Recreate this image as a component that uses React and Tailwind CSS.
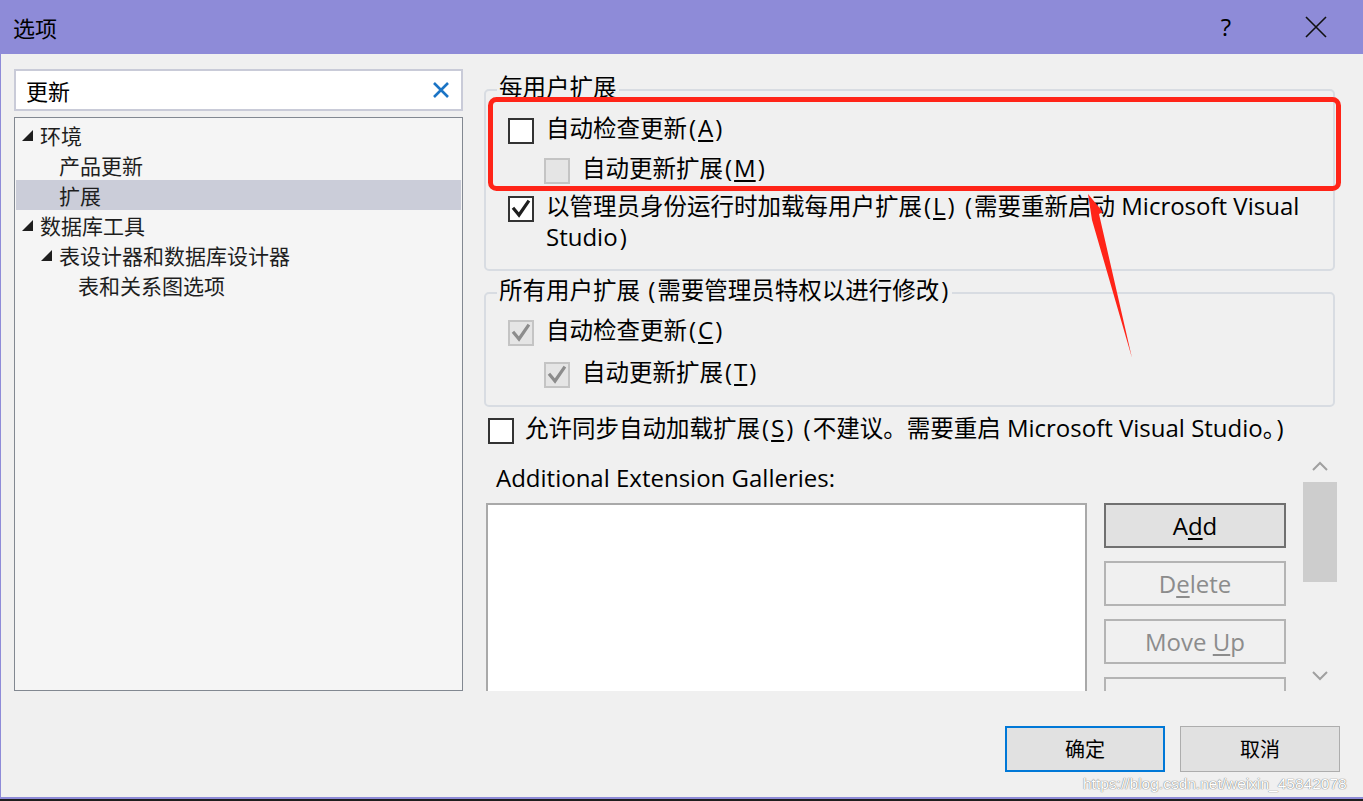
import React from "react";

const FONT = { fontFamily: '"Open Sans", "Noto Sans CJK SC", sans-serif' };
const CJK = { fontFamily: '"Noto Sans CJK SC", "Open Sans", sans-serif' };
const LAT = { fontFamily: '"Open Sans", sans-serif' };

function Mixed({ text }) {
  const chars = [];
  let i = 0;
  while (i < text.length) {
    let ch = text[i];
    let u = false;
    if (ch === "&") {
      u = true;
      ch = text[i + 1];
      i += 2;
    } else i += 1;
    const paren = ch === "(" || ch === ")";
    chars.push({ ch, u, ascii: ch.charCodeAt(0) < 128, paren });
  }
  const groups = [];
  for (const c of chars) {
    const last = groups[groups.length - 1];
    if (last && !c.paren && !last.paren && last.ascii === c.ascii && last.u === c.u) last.s += c.ch;
    else groups.push({ s: c.ch, ascii: c.ascii, u: c.u, paren: c.paren });
  }
  return (
    <>
      {groups.map((g, k) =>
        g.paren ? (
          <span key={k} className="text-[24px] leading-none ml-[2px] mr-[2px]" style={LAT}>
            {g.s}
          </span>
        ) : g.ascii ? (
          <span
            key={k}
            className={"text-[24px] leading-none " + (g.u ? "underline underline-offset-[3px]" : "")}
            style={LAT}
          >
            {g.s}
          </span>
        ) : (
          <span key={k} className="text-[23.5px] leading-none" style={CJK}>
            {g.s}
          </span>
        )
      )}
    </>
  );
}

function Tri() {
  return (
    <svg width="11" height="11" viewBox="0 0 11 11" className="shrink-0">
      <polygon points="11,0 11,11 0,11" fill="#1e1e1e" />
    </svg>
  );
}

function Check({ color = "#1e1e1e" }) {
  return (
    <svg width="22" height="22" viewBox="0 0 22 22">
      <polyline points="4,11 9,17 18,4" fill="none" stroke={color} strokeWidth="3.2" strokeLinecap="square" />
    </svg>
  );
}

function Box({ checked = false, disabled = false }) {
  return (
    <div
      className={
        "w-[26px] h-[26px] shrink-0 flex items-center justify-center border-2 " +
        (disabled ? "bg-[#e5e5e5] border-[#c4c4c4]" : "bg-white border-[#333333]")
      }
    >
      {checked && <Check color={disabled ? "#8c8c8c" : "#1e1e1e"} />}
    </div>
  );
}

function Row({ indent = false, checked, disabled, text, className = "" }) {
  return (
    <div className={"flex items-center h-[30px] " + (indent ? "pl-[58px] " : "pl-[22px] ") + className}>
      <Box checked={checked} disabled={disabled} />
      <span className="ml-[12px] text-[16px] leading-[30px] text-black whitespace-nowrap">
        <Mixed text={text} />
      </span>
    </div>
  );
}

function TreeRow({ level, tri, selected, children }) {
  return (
    <div
      className={"flex items-center h-[30px] " + (selected ? "bg-[#cbcdd9]" : "")}
      style={{ paddingLeft: 6 + 19 * level }}
    >
      {tri ? <Tri /> : <div className="w-[11px] shrink-0" />}
      <span className="ml-[7px] text-[21px] leading-[30px] text-[#1e1e1e] whitespace-nowrap" style={CJK}>
        {children}
      </span>
    </div>
  );
}

function Btn({ children, disabled, primary }) {
  return (
    <div
      className={
        "h-[45px] shrink-0 flex items-center justify-center border-2 " +
        (primary
          ? "bg-[#e1e1e1] border-[#707070] text-black"
          : disabled
          ? "bg-[#f0f0f0] border-[#b4b4b4] text-[#8c8c8c]"
          : "")
      }
    >
      <span className="text-[24px] whitespace-pre" style={LAT}>
        {children}
      </span>
    </div>
  );
}

export default function App() {
  return (
    <div className="w-[1363px] h-[801px] relative overflow-hidden flex flex-col bg-[#f0f0f0]" style={FONT}>
      {/* Title bar */}
      <div className="h-[54px] shrink-0 bg-[#8e8bd8] flex items-center pl-[13px]">
        <span className="text-[22px] text-black" style={CJK}>选项</span>
        <div className="flex-1" />
        <span className="text-[24px] text-black mr-[74px]" style={LAT}>?</span>
        <svg width="22" height="22" viewBox="0 0 22 22" className="mr-[36px]">
          <path d="M1 1 L21 21 M21 1 L1 21" stroke="#111" strokeWidth="1.6" />
        </svg>
      </div>

      {/* Body */}
      <div className="flex-1 flex flex-col border-l border-[#8e8bd8]">
        <div className="h-[637px] flex shrink-0 overflow-hidden">
          {/* Left column */}
          <div className="w-[449px] ml-[13px] flex flex-col pt-[15px]">
            <div className="h-[42px] shrink-0 border-2 border-[#c9cbd8] bg-white flex items-center pl-[10px] pr-[11px]">
              <span className="text-[22px] text-black flex-1" style={CJK}>更新</span>
              <svg width="18" height="18" viewBox="0 0 18 18">
                <path d="M2 2 L16 16 M16 2 L2 16" stroke="#1b74c5" strokeWidth="2.6" />
              </svg>
            </div>
            <div className="mt-[6px] h-[574px] border border-[#828891] bg-[#f5f5f5] p-[1px] pt-[2px]">
              <TreeRow level={0} tri>环境</TreeRow>
              <TreeRow level={1}>产品更新</TreeRow>
              <TreeRow level={1} selected>扩展</TreeRow>
              <TreeRow level={0} tri>数据库工具</TreeRow>
              <TreeRow level={1} tri>表设计器和数据库设计器</TreeRow>
              <TreeRow level={2}>表和关系图选项</TreeRow>
            </div>
          </div>

          {/* Right column */}
          <div className="w-[853px] ml-[21px] flex flex-col pt-[21px]">
            <fieldset className="w-[851px] border-2 border-[#d8dce2] rounded-[5px] pb-[13px]">
              <legend className="ml-[11px] px-[2px] text-[16px] leading-[30px] text-black">
                <Mixed text="每用户扩展" />
              </legend>
              <Row className="mt-[11px]" text="自动检查更新(&A)" />
              <Row className="mt-[10px]" indent disabled text="自动更新扩展(&M)" />
              <div className="flex items-start pl-[22px] mt-[8px]">
                <div className="mt-[2px]">
                  <Box checked />
                </div>
                <span className="ml-[12px] w-[772px] text-[16px] leading-[31px] text-black">
                  <Mixed text="以管理员身份运行时加载每用户扩展(&L) (需要重新启动 Microsoft Visual Studio)" />
                </span>
              </div>
            </fieldset>

            <fieldset className="w-[851px] mt-[7px] border-2 border-[#d8dce2] rounded-[5px] pb-[15px]">
              <legend className="ml-[11px] px-[2px] text-[16px] leading-[30px] text-black">
                <Mixed text="所有用户扩展 (需要管理员特权以进行修改)" />
              </legend>
              <Row className="mt-[10px]" checked disabled text="自动检查更新(&C)" />
              <Row className="mt-[12px]" indent checked disabled text="自动更新扩展(&T)" />
            </fieldset>

            <div className="flex items-center h-[30px] mt-[9px] pl-[4px]">
              <Box />
              <span className="ml-[11px] text-[16px] leading-[30px] text-black whitespace-nowrap">
                <Mixed text="允许同步自动加载扩展(&S) (不建议。需要重启 Microsoft Visual Studio。)" />
              </span>
            </div>

            <div className="flex mt-[9px] flex-1 min-h-0">
              <div className="w-[601px] ml-[2px] flex flex-col">
                <div className="pt-[8px] pl-[10px] text-[24px] leading-[30px] text-black whitespace-nowrap" style={LAT}>
                  Additional Extension Galleries:
                </div>
                <div className="mt-[10px] h-[240px] shrink-0 border-2 border-[#a9a9a9] bg-white" />
              </div>
              <div className="w-[182px] ml-[17px] pt-[48px] flex flex-col gap-[13px]">
                <Btn primary>
                  A<u className="underline-offset-[3px]">d</u>d
                </Btn>
                <Btn disabled>
                  D<u className="underline-offset-[3px]">e</u>lete
                </Btn>
                <Btn disabled>
                  {"Move "}
                  <u className="underline-offset-[3px]">U</u>p
                </Btn>
                <Btn disabled>
                  {"Move "}
                  <u className="underline-offset-[3px]">D</u>own
                </Btn>
              </div>
              <div className="w-[34px] ml-[17px] flex flex-col items-center">
                <svg width="16" height="10" viewBox="0 0 16 10" className="mt-[6px]">
                  <path d="M1 9 L8 2 L15 9" fill="none" stroke="#a0a0a0" strokeWidth="2" />
                </svg>
                <div className="mt-[11px] w-[34px] h-[100px] bg-[#cdcdcd]" />
                <div className="flex-1" />
                <svg width="16" height="10" viewBox="0 0 16 10" className="mb-[10px]">
                  <path d="M1 1 L8 8 L15 1" fill="none" stroke="#a0a0a0" strokeWidth="2" />
                </svg>
              </div>
            </div>
          </div>
        </div>

        {/* Footer */}
        <div className="flex-1 flex justify-end items-start pt-[35px] pr-[23px]">
          <div className="w-[160px] h-[46px] border-2 border-[#0078d7] bg-[#e1e1e1] flex items-center justify-center text-[20px] text-black" style={CJK}>
            确定
          </div>
          <div className="w-[160px] h-[46px] ml-[15px] border border-[#adadad] bg-[#e1e1e1] flex items-center justify-center text-[20px] text-black" style={CJK}>
            取消
          </div>
        </div>
      </div>
      <div className="h-[2px] shrink-0 bg-[#8e8bd8]" />
      <div className="h-[2px] shrink-0 bg-[#1e1e1e]" />

      {/* Watermark */}
      <div
        className="absolute left-[1083px] top-[772px] text-[15.5px] text-white whitespace-nowrap [text-shadow:0_0_1px_#777,0_0_1px_#777]"
        style={{ fontFamily: '"Liberation Sans", sans-serif' }}
      >
        https://blog.csdn.net/weixin_45842078
      </div>

      {/* Red annotation overlay */}
      <svg className="absolute left-0 top-0 pointer-events-none" width="1363" height="801">
        <rect x="490.5" y="99.5" width="848" height="89" rx="6" fill="none" stroke="#ff2418" strokeWidth="5" />
        <polygon points="1088,194 1103,212 1099,214 1132,358 1092,220" fill="#ff2418" />
      </svg>
    </div>
  );
}
